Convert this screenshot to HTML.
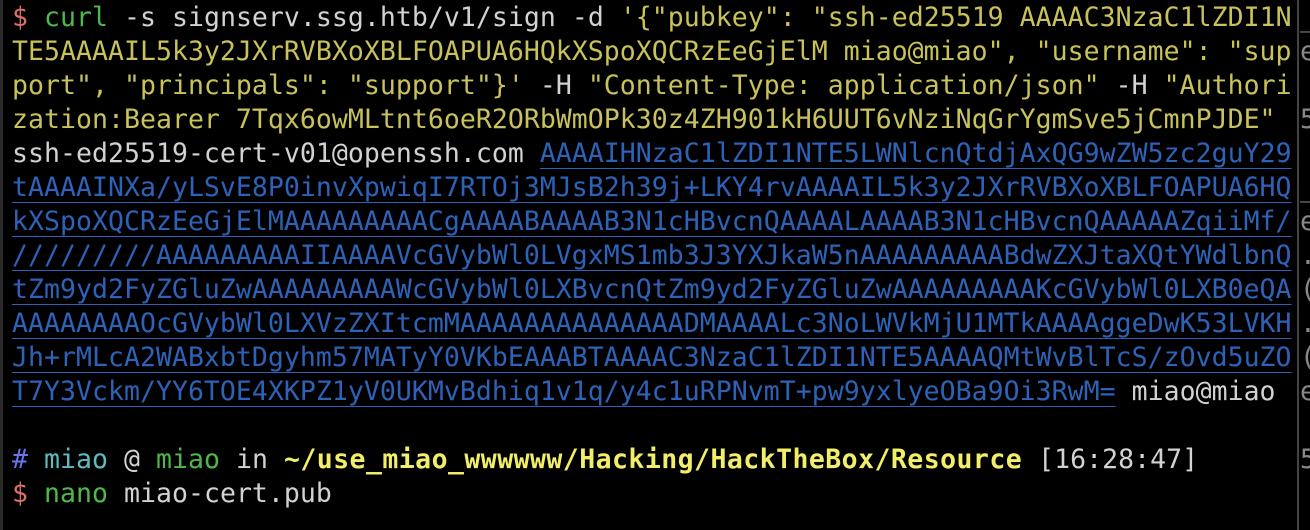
<!DOCTYPE html>
<html><head><meta charset="utf-8"><style>
html,body{margin:0;padding:0;background:#000;width:1310px;height:530px;overflow:hidden}
body{position:relative}
pre{position:absolute;left:12px;top:1px;margin:0;font-family:"DejaVu Sans Mono","Liberation Mono",monospace;font-size:26.5px;line-height:34px;color:#d2d2d2;white-space:pre;letter-spacing:0.04px}
.y{color:#c9c25a}.r{color:#e0706a}.g{color:#4fb84a}.b{color:#2e62b8;text-decoration:underline;text-decoration-thickness:1px;text-underline-offset:6px}
.h{color:#6b74f0}.c{color:#5cbcc0}.p{color:#f2ee6a;font-weight:bold;letter-spacing:0.45px}
.bar{position:absolute;left:1297px;top:0;width:2px;height:530px;background:#444}
.lb{position:absolute;left:0;top:0;width:3px;height:530px;background:#2a2a2a}
.frag{position:absolute;left:1300px;font-family:"DejaVu Sans Mono",monospace;font-size:26.5px;color:#888;line-height:34px}
</style></head><body>
<div class="lb"></div>
<pre><span class="r">$</span> <span class="g">curl</span> -s signserv.ssg.htb/v1/sign -d <span class="y">'{"pubkey": "ssh-ed25519 AAAAC3NzaC1lZDI1N</span>
<span class="y">TE5AAAAIL5k3y2JXrRVBXoXBLFOAPUA6HQkXSpoXQCRzEeGjElM miao@miao", "username": "sup</span>
<span class="y">port", "principals": "support"}'</span> -H <span class="y">"Content-Type: application/json"</span> -H <span class="y">"Authori</span>
<span class="y">zation:Bearer 7Tqx6owMLtnt6oeR2ORbWmOPk30z4ZH901kH6UUT6vNziNqGrYgmSve5jCmnPJDE"</span>
ssh-ed25519-cert-v01@openssh.com <span class="b">AAAAIHNzaC1lZDI1NTE5LWNlcnQtdjAxQG9wZW5zc2guY29</span>
<span class="b">tAAAAINXa/yLSvE8P0invXpwiqI7RTOj3MJsB2h39j+LKY4rvAAAAIL5k3y2JXrRVBXoXBLFOAPUA6HQ</span>
<span class="b">kXSpoXQCRzEeGjElMAAAAAAAAACgAAAABAAAAB3N1cHBvcnQAAAALAAAAB3N1cHBvcnQAAAAAZqiiMf/</span>
<span class="b">/////////AAAAAAAAAIIAAAAVcGVybWl0LVgxMS1mb3J3YXJkaW5nAAAAAAAAABdwZXJtaXQtYWdlbnQ</span>
<span class="b">tZm9yd2FyZGluZwAAAAAAAAAWcGVybWl0LXBvcnQtZm9yd2FyZGluZwAAAAAAAAAKcGVybWl0LXB0eQA</span>
<span class="b">AAAAAAAAOcGVybWl0LXVzZXItcmMAAAAAAAAAAAAAADMAAAALc3NoLWVkMjU1MTkAAAAggeDwK53LVKH</span>
<span class="b">Jh+rMLcA2WABxbtDgyhm57MATyY0VKbEAAABTAAAAC3NzaC1lZDI1NTE5AAAAQMtWvBlTcS/zOvd5uZO</span>
<span class="b">T7Y3Vckm/YY6TOE4XKPZ1yV0UKMvBdhiq1v1q/y4c1uRPNvmT+pw9yxlyeOBa9Oi3RwM=</span> miao@miao

<span class="h">#</span> <span class="c">miao</span> @ <span class="g">miao</span> in <span class="p">~/use_miao_wwwwww/Hacking/HackTheBox/Resource</span> [16:28:47]
<span class="r">$</span> <span class="g">nano</span> miao-cert.pub</pre>
<div class="bar"></div>
<div class="frag" style="top:1px">_</div>
<div class="frag" style="top:35px">e</div>
<div class="frag" style="top:103px">5</div>
<div class="frag" style="top:171px">_</div>
<div class="frag" style="top:205px">e</div>
<div class="frag" style="top:239px">.(</div>
<div class="frag" style="top:307px">.(</div>
<div class="frag" style="top:375px">e</div>
<div class="frag" style="top:443px">5</div>
</body></html>
